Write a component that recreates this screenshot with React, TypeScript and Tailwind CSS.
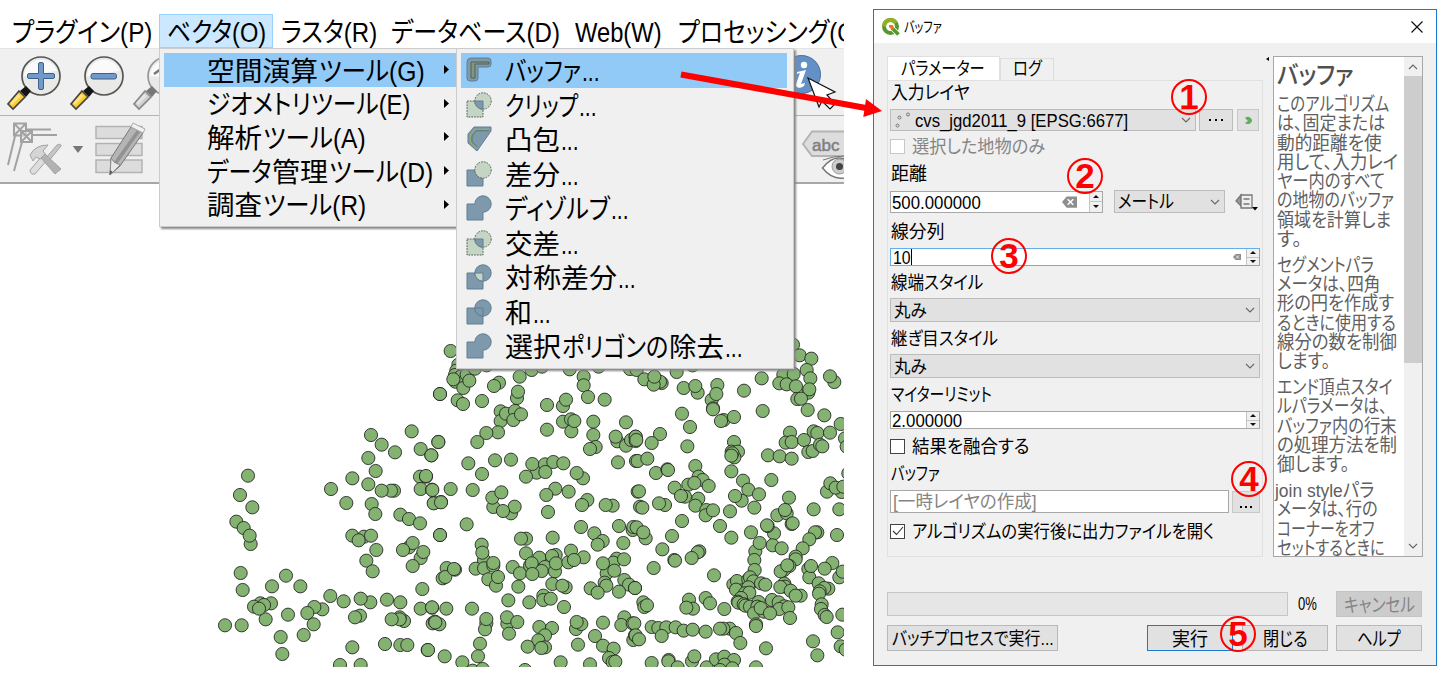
import React, { useLayoutEffect, useRef, useState } from 'react';

type Seg = [string, number];

function Fit({ text, w, className = '' }: { text: string; w: number; className?: string }) {
  const ref = useRef<HTMLSpanElement>(null);
  const [s, setS] = useState(1);
  useLayoutEffect(() => {
    if (ref.current) setS(w / ref.current.offsetWidth);
  }, [text, w]);
  return (
    <span className={`block shrink-0 whitespace-nowrap ${className}`} style={{ width: w }}>
      <span ref={ref} className="inline-block origin-left whitespace-pre" style={{ transform: `scaleX(${s})` }}>{text}</span>
    </span>
  );
}

const Line = ({ segs, className = '' }: { segs: Seg[]; className?: string }) => (
  <span className={`flex shrink-0 items-center gap-px pt-[5px] ${className}`}>
    {segs.map(([t, w], i) => <Fit key={i} text={t} w={w} />)}
  </span>
);

const dotsWest = [
  [690,72],[483,195],[515,224],[555,247],[605,184],[632,237],[664,256],[685,216],[475,264],[497,303],[427,325],[475,343],[363,357],[409,399],[552,362],[543,362],[515,362],[630,320],[648,320],[632,357],[666,359],[672,399],[693,396],[485,402],[496,432],[571,434],[597,447],[630,460],[114,317],[90,375],[127,412],[79,455],[101,474],[122,522],[119,497],[427,497],[462,500],[446,511],[483,497],[499,540],[469,572],[488,604],[597,532],[608,519],[579,540],[632,564],[608,588],[640,546],[690,495],[92,609],[98,660],[228,617],[186,649],[271,649],[45,766],[95,766],[151,700],[183,700],[132,710],[167,748],[162,705],[147,716],[234,734],[337,718],[313,711],[292,729],[311,763],[281,795],[212,801],[217,852],[361,678],[401,694],[481,697],[452,686],[450,737],[435,742],[531,689],[571,697],[637,657],[632,716],[666,713],[582,753],[569,742],[569,748],[545,748],[525,822],[571,825],[592,825],[653,840],[427,832],[390,885],[452,885],[668,760],[675,755],
];
const dotsMid = [
  [62,33],[85,74],[79,92],[75,105],[76,125],[92,110],[110,104],[135,86],[170,76],[100,144],[118,122],[70,118],[30,162],[83,181],[99,192],[156,183],[207,128],[192,138],[269,110],[305,90],[336,80],[419,88],[461,110],[461,136],[506,80],[600,87],[474,171],[524,179],[261,174],[264,155],[212,214],[212,243],[228,221],[255,213],[250,240],[273,223],[204,277],[169,279],[142,306],[25,306],[4,346],[115,370],[156,402],[195,361],[243,359],[351,195],[399,198],[408,179],[351,269],[399,245],[423,238],[424,274],[433,243],[490,245],[490,285],[497,321],[480,327],[588,247],[562,304],[557,290],[588,317],[603,300],[617,290],[617,303],[564,367],[618,363],[7,450],[62,447],[128,450],[11,490],[33,487],[190,501],[187,473],[214,457],[243,520],[254,500],[219,513],[320,398],[288,410],[307,372],[345,373],[370,366],[346,396],[400,370],[459,415],[440,399],[376,446],[416,455],[349,465],[354,516],[472,480],[456,495],[548,497],[527,495],[623,455],[630,500],[30,585],[110,553],[155,614],[162,660],[157,638],[137,686],[162,685],[190,677],[190,669],[50,684],[75,689],[38,715],[46,711],[72,687],[175,718],[198,737],[204,711],[288,596],[273,596],[368,593],[248,681],[270,700],[288,640],[300,677],[328,653],[305,670],[345,681],[335,693],[307,702],[375,694],[377,645],[366,648],[378,670],[415,667],[423,632],[461,652],[432,660],[265,740],[367,732],[407,742],[397,737],[453,561],[493,580],[518,603],[503,614],[567,558],[608,570],[610,561],[580,609],[530,700],[560,656],[550,668],[582,658],[519,670],[553,692],[524,728],[529,737],[583,720],[597,734],[615,744],[482,745],[503,758],[567,755],[6,802],[49,806],[126,806],[28,853],[16,847],[169,850],[165,868],[169,837],[235,781],[232,851],[231,832],[262,846],[237,881],[298,787],[340,767],[340,780],[362,776],[402,801],[328,861],[366,864],[345,886],[325,901],[293,920],[345,922],[334,924],[444,914],[438,867],[454,852],[440,846],[519,848],[583,832],[574,855],[608,850],[495,888],[519,917],[551,926],[610,900],[615,886],[537,954],[548,966],[556,965],[150,911],[144,949],[44,949],[97,967],[-6,930],[128,992],[158,987],[285,990],[392,967],[480,973],[-12,408],
];
const dotsEast = [
  [474,14],[494,46],[529,56],[515,90],[5,90],[28,118],[80,129],[75,125],[56,134],[58,110],[125,96],[173,76],[146,144],[188,158],[181,138],[247,135],[230,180],[244,162],[234,205],[234,208],[327,152],[380,115],[266,240],[258,243],[297,231],[383,213],[141,221],[165,261],[75,282],[50,309],[2,290],[4,300],[8,363],[37,356],[157,319],[63,399],[97,388],[99,390],[181,378],[445,104],[433,130],[476,102],[455,133],[483,139],[526,115],[520,158],[523,148],[487,177],[498,176],[518,210],[568,226],[598,126],[585,109],[617,252],[297,306],[290,335],[309,335],[298,352],[292,340],[289,347],[289,394],[399,346],[434,349],[470,356],[465,278],[452,308],[470,306],[507,300],[536,274],[547,279],[585,278],[520,336],[533,333],[555,314],[562,319],[630,295],[635,320],[324,422],[409,420],[340,449],[372,463],[320,482],[300,468],[358,503],[191,410],[160,434],[203,420],[221,438],[178,429],[190,476],[119,443],[150,470],[138,468],[181,497],[214,510],[212,526],[234,511],[285,514],[12,454],[22,503],[90,495],[72,490],[141,543],[255,558],[111,588],[289,593],[82,628],[5,562],[32,595],[25,577],[462,473],[427,526],[455,520],[450,510],[470,552],[473,550],[536,508],[613,508],[576,455],[586,430],[620,456],[602,443],[625,440],[417,580],[398,558],[396,556],[348,577],[413,616],[440,625],[361,634],[374,609],[606,585],[547,577],[540,577],[523,598],[503,625],[482,650],[482,658],[463,678],[447,690],[437,694],[457,676],[358,660],[359,690],[118,660],[120,662],[193,634],[188,637],[170,654],[56,684],[237,706],[0,744],[162,779],[174,806],[154,803],[212,774],[225,790],[268,807],[25,787],[28,801],[36,796],[520,687],[523,712],[528,678],[592,669],[569,686],[613,712],[623,695],[551,730],[580,746],[568,744],[554,754],[552,761],[560,793],[558,807],[569,825],[575,831],[622,824],[608,877],[534,904],[547,946],[617,919],[632,929],[448,731],[450,740],[436,741],[467,752],[497,767],[482,767],[295,733],[306,723],[340,718],[345,712],[355,724],[322,751],[340,742],[378,730],[391,734],[303,749],[330,760],[343,758],[318,774],[308,785],[310,788],[326,793],[331,797],[345,800],[371,786],[367,800],[357,820],[387,815],[377,804],[411,780],[431,787],[448,799],[433,807],[460,802],[405,820],[465,834],[363,853],[363,858],[50,861],[70,864],[94,862],[80,888],[122,862],[146,872],[173,869],[212,875],[284,866],[265,866],[255,866],[303,879],[316,909],[393,925],[-2,850],[2,886],[12,898],[50,969],[101,960],[100,964],[128,982],[171,964],[178,949],[215,982],[243,958],[268,950],[297,960],[268,974],[255,990],[292,985],[363,982],[640,400],
];

const Dots = ({ pts, x, y }: { pts: number[][]; x: number; y: number }) => (
  <g transform={`translate(${x} ${y}) scale(0.33333)`}>
    {pts.map(([cx, cy], i) => <circle key={i} cx={cx} cy={cy} r="19.7" />)}
  </g>
);

const B = '#7e98ac', BS = '#5f7f96', G = '#c5d5c4';
function GeoIcon({ kind }: { kind: string }) {
  const dash = { stroke: '#4f5f55', strokeWidth: 1, strokeDasharray: '1.7 1.1' };
  return (
    <svg viewBox="0 0 26 26" className="h-[26px] w-[26px] shrink-0" fill={B} stroke={BS} strokeWidth="1">
      {kind === 'buffer' && <>
        <path d="M5 1h17a3 3 0 0 1 3 3v3a3 3 0 0 1-3 3H12v11a3 3 0 0 1-3 3H4a3 3 0 0 1-3-3V5a4 4 0 0 1 4-4z" />
        <path d="M5 21V5h18v2H9v14z" fill="#85947a" stroke="#4d6656" />
      </>}
      {kind === 'clip' && <>
        <rect x="1" y="9" width="16" height="16" fill={G} {...dash} />
        <circle cx="17" cy="9" r="8.2" fill={G} {...dash} />
        <path d="M8.8 9H17v8.2A8.2 8.2 0 0 1 8.8 9z" />
      </>}
      {kind === 'hull' && <>
        <path d="M8 1h17v4L11 25l-9-8V8z" />
        <path d="M23 3.500H9L4.500 9v7.500l6 5.500" fill="none" stroke="#8ea778" strokeWidth="1.600" />
        <path d="M23 4.800H10L6 10v6l5 4.500" fill="none" stroke="#4d7060" strokeWidth=".8" />
      </>}
      {kind === 'diff' && <>
        <path d="M1 9h16v16H1z" />
        <circle cx="17" cy="9" r="8.2" fill={G} {...dash} />
      </>}
      {kind === 'dissolve' && <path d="M1 9h7.8A8.2 8.2 0 1 1 17 17.2V25H1z" />}
      {(kind === 'sym' || kind === 'union') && <>
        <path d="M1 9h16v16H1z" />
        <circle cx="17" cy="9" r="8.2" />
        <path d="M8.8 9H17v8.2A8.2 8.2 0 0 1 8.8 9z" fill={kind === 'sym' ? G : B} />
      </>}
    </svg>
  );
}

const vectorMenu: Seg[][] = [
  [['空間演算', 111], ['ツール(G)', 106]],
  [['ジオメトリツール(E)', 203]],
  [['解析', 55], ['ツール(A)', 103]],
  [['データ', 64], ['管理', 56], ['ツール(D)', 104]],
  [['調査', 55], ['ツール(R)', 103]],
];
const geoMenu: { icon: string; segs: Seg[] }[] = [
  { icon: 'buffer', segs: [['バッファ', 76], ['...', 18]] },
  { icon: 'clip', segs: [['クリップ', 73], ['...', 18]] },
  { icon: 'hull', segs: [['凸包', 55], ['...', 18]] },
  { icon: 'diff', segs: [['差分', 55], ['...', 18]] },
  { icon: 'dissolve', segs: [['ディゾルブ', 105], ['...', 18]] },
  { icon: 'clip', segs: [['交差', 55], ['...', 18]] },
  { icon: 'sym', segs: [['対称差分', 112], ['...', 18]] },
  { icon: 'union', segs: [['和', 27], ['...', 18]] },
  { icon: 'dissolve', segs: [['選択', 56], ['ポリゴンの', 106], ['除去', 55], ['...', 18]] },
];

function Magnifier({ sign, gray = false }: { sign: string; gray?: boolean }) {
  return (
    <svg viewBox="0 0 56 56" className="h-14 w-14 shrink-0">
      <circle cx="35" cy="21" r="19" fill="#e9e9e8" stroke={gray ? '#999' : '#555753'} strokeWidth="1.7" />
      <path d="M18 21a17 17 0 0 1 33-5c-10-1-18 8-33 5z" fill="#fafafa" />
      <path d="M20 31l5 5-5 6-6-6z" fill={gray ? '#777' : '#151515'} />
      <path d="M13 36l6 6L7 54l-5-5z" fill={gray ? '#d0d0d0' : '#fcc92e'} stroke={gray ? '#888' : '#444'} strokeWidth="1.700" />
      <path d="M12 39l3 2-9 9-2-2z" fill={gray ? '#eee' : '#fff0a0'} opacity=".7" />
      {sign === '+' && <path d="M32.500 9q0-1.500 1.500-1.500h2q1.500 0 1.500 1.500v9.500H47q1.500 0 1.500 1.500v2q0 1.500-1.500 1.500h-9.500V33q0 1.500-1.500 1.500h-2q-1.500 0-1.500-1.500v-9.500H23q-1.500 0-1.500-1.500v-2q0-1.500 1.500-1.500h9.500z" fill="#6f9ac9" stroke="#3f6089" />}
      {sign === '-' && <rect x="22" y="18.500" width="25.500" height="5.500" rx="2" fill="#6f9ac9" stroke="#3f6089" />}
      {gray && <path d="M22 19l7-5" fill="none" stroke="#777" strokeWidth="2.500" />}
    </svg>
  );
}

const NodeTool = () => (
  <svg viewBox="0 0 60 56" className="h-14 w-[60px] shrink-0" fill="none" stroke="#a2a2a2">
    <path d="M22 8.500h25M28 14h25M11 15L4 44M18 21L10 50" strokeWidth="2" />
    <path d="M10 2.500h12v12H10zM10 2.500l12 12M22 2.500l-12 12" strokeWidth="2" fill="#eee" fillOpacity=".5" />
    <path d="M17 10h11v11H17zM17 10l11 11M28 10L17 21" strokeWidth="2" fill="#eee" fillOpacity=".5" />
    <path d="M41 38l12-14q4-2 4 1L44 41z" fill="#c6c6c6" />
    <path d="M38 35l5 4-12 14q-5 1-5-4z" fill="#ddd" />
    <path d="M26 34q5-10 18-10l-5 6 3 4-6 4-4-2-3 4z" fill="#d5d5d5" />
    <path d="M37 37l4-4 16 15-6 5z" fill="#b2b2b2" />
  </svg>
);
const EditTool = () => (
  <svg viewBox="0 0 54 56" className="ml-[10px] h-14 w-[54px] shrink-0" fill="#dcdcdc" stroke="#b2b2b2" strokeWidth="1.500">
    <path d="M2 5.500h46v12H2zM2 22.500h46v12H2zM2 39h46v12.500H2z" />
    <path d="M37 6l12 6-23 33-10 9 1-17z" fill="#b5b5b5" stroke="#777" strokeWidth="1" />
    <path d="M43 9l3 2-23 32-3-2z" fill="#929292" stroke="none" />
    <path d="M37 6l2-4 12 6-2 4z" fill="#f2f2f2" stroke="#aaa" strokeWidth="1" />
    <path d="M17 37l3 4 6 3-10 10z" fill="#e8e8e8" stroke="#888" strokeWidth="1" />
    <path d="M16.500 49l2 2-3 3z" fill="#555" stroke="none" />
  </svg>
);

const Chevron = ({ up = false }: { up?: boolean }) => (
  <svg viewBox="0 0 10 6" className="h-[6px] w-[10px] shrink-0" fill="none" stroke="#666" strokeWidth="1.100"><path d={up ? 'M1 5l4-4 4 4' : 'M1 1l4 4 4-4'} /></svg>
);
const Steppers = () => (
  <span className="flex h-full w-[13px] shrink-0 flex-col gap-px bg-[#c4c4c4] pl-px">
    {['M0 3L3 0l3 3z', 'M0 0h6L3 3z'].map((d) => (
      <span key={d} className="flex flex-1 items-center justify-center bg-[#f0f0f0]">
        <svg viewBox="0 0 6 3" className="h-[3px] w-[6px]"><path d={d} fill="#111" /></svg>
      </span>
    ))}
  </span>
);
const Clear = ({ small = false }: { small?: boolean }) => (
  <svg viewBox="0 0 16 12" className={small ? 'mr-[5px] h-[6px] w-2' : 'mr-3 h-3 w-[15px]'}>
    <path d="M0 6l5-6h11v12H5z" fill="#8e8e8e" /><path d="M6 3l6 6M12 3L6 9" stroke="#fff" strokeWidth="1.600" />
  </svg>
);
const Combo = ({ children, className = '' }: { children: React.ReactNode; className?: string }) => (
  <div className={`flex items-center justify-between border border-[#bcbcbc] bg-[#e1e1e1] pr-1 pl-[3px] ${className}`}>{children}<Chevron /></div>
);
const Check = ({ on = false, dim = false }: { on?: boolean; dim?: boolean }) => (
  <span className={`flex h-[15px] w-[15px] items-center justify-center border bg-white ${dim ? 'border-[#c8c8c8]' : 'border-[#444]'}`}>
    {on && <svg viewBox="0 0 12 10" className="h-[10px] w-3" fill="none" stroke="#333" strokeWidth="1.100"><path d="M1 5l3.500 3.500L11 1" /></svg>}
  </span>
);
const Btn = ({ text, w, className = '' }: { text: string; w: number; className?: string }) => (
  <button className={`flex h-[26px] w-[86px] items-center justify-center border text-[19px] leading-none ${className}`}><Fit text={text} w={w} className="pt-[2px]" /></button>
);

const helpText: Seg[][] = [
  [['このアルゴリズム', 112], ['は、固定または', 108], ['動的距離を使', 105], ['用して、入力レイ', 121], ['ヤー内のすべて', 108], ['の地物のバッファ', 117], ['領域を計算しま', 114], ['す。', 25]],
  [['セグメントパラ', 97], ['メータは、四角', 103], ['形の円を作成す', 117], ['るときに使用する', 119], ['線分の数を制御', 120], ['します。', 53]],
  [['エンド頂点スタイ', 116], ['ルパラメータは、', 110], ['バッファ内の行末', 120], ['の処理方法を制', 120], ['御します。', 72]],
  [['join styleパラ', 99], ['メータは、行の', 101], ['コーナーをオフ', 98], ['セットするときに', 108]],
];

const Badge = ({ n, className }: { n: string; className: string }) => (
  <span className={`absolute flex h-9 w-9 items-center justify-center rounded-full border-2 border-[#f00] pb-px text-[35px] leading-none font-bold text-[#f00] ${className}`}>{n}</span>
);

export default function App() {
  return (
    <div className="relative flex h-[676px] w-[1437px] overflow-hidden bg-white font-['Liberation_Sans','Noto_Sans_CJK_JP',sans-serif] leading-none text-black [font-feature-settings:'palt']">
      <section className="relative flex h-[667px] w-[844px] shrink-0 flex-col overflow-hidden">
        <nav className="flex h-12 shrink-0 pt-[14px] text-[27px]">
          <Line segs={[['プラグイン(P)', 140]]} className="ml-3" />
          <div className="ml-[7px] flex h-[34px] w-[114px] shrink-0 items-center border border-[#99d1ff] bg-[#cce8ff] pl-[7px]"><Fit text="ベクタ(O)" w={99} className="pt-[5px]" /></div>
          <Line segs={[['ラスタ(R)', 96]]} className="ml-2" />
          <Line segs={[['データベース(D)', 169]]} className="ml-[14px]" />
          <Line segs={[['Web(W)', 87]]} className="ml-[15px]" />
          <Line segs={[['プロセッシング(O)', 186]]} className="ml-4" />
        </nav>
        <div className="flex h-[68px] shrink-0 justify-between border-t border-b border-t-[#e4e4e4] border-b-[#b4b4b4] bg-[#f0f0f0]">
          <div className="flex gap-[7px] pt-[6px] pl-[6px]"><Magnifier sign="+" /><Magnifier sign="-" /><Magnifier sign="1" gray /></div>
          <svg viewBox="0 0 64 60" className="mt-[5px] h-[60px] w-16 shrink-0">
            <circle cx="21.500" cy="20.500" r="19" fill="#6391c6" stroke="#456f9f" />
            <circle cx="24" cy="11" r="3.200" fill="#fff" />
            <path d="M17 18l9-2-5 14 4-1-1 3c-4 3-9 2-8-2l4-11-3 1z" fill="#fff" />
            <path d="M28 24l27 14-8 3 8 9-5 5-8-8-3 6z" fill="#fff" stroke="#111" strokeWidth="1.200" />
          </svg>
        </div>
        <div className="flex h-[68px] shrink-0 justify-between border-b-2 border-[#a7a7a7] bg-[#f0f0f0]">
          <div className="flex pt-[5px] pl-1">
            <NodeTool />
            <svg viewBox="0 0 12 8" className="mt-[25px] ml-2 h-[7px] w-3"><path d="M0 0h12L6 8z" fill="#777" /></svg>
            <EditTool />
          </div>
          <svg viewBox="0 0 44 56" className="mt-2 h-14 w-11 overflow-hidden">
            <path d="M3 20l9-12.500h40V32H12z" fill="#ddd" stroke="#b4b4b4" strokeWidth="2" />
            <text x="12" y="26.500" fontFamily="Liberation Sans" fontSize="17" fill="#808080" stroke="#808080" strokeWidth=".5">abc</text>
            <path d="M22.500 44q8-10 16-10 6 0 12 4v14q-16 7-28-8z" fill="#fff" stroke="#777" strokeWidth="1.500" /><circle cx="39.500" cy="42.500" r="7.500" fill="#ccc" stroke="#999" /><circle cx="39.500" cy="42.500" r="3.500" fill="#444" />
            <path d="M23 36q10-4 22-4" fill="none" stroke="#777" />
          </svg>
        </div>
        <svg viewBox="0 184 844 483" className="h-[483px] w-[844px] shrink-0" fill="#83b271" stroke="#232323" strokeWidth="2.600">
          <Dots pts={dotsWest} x={210} y={370} /><Dots pts={dotsMid} x={430} y={340} /><Dots pts={dotsEast} x={635} y={340} />
        </svg>
        <div className="absolute top-12 left-[159px] h-[179px] w-[298px] border border-[#ccc] bg-[#f0f0f0] pt-1 pl-1 text-[27px] shadow-[2px_2px_2px_#888]">
          {vectorMenu.map((segs, i) => (
            <div key={i} className={`flex h-[33.6px] items-center justify-between pr-[7px] pl-[43px] ${i ? '' : 'bg-[#91c9f7]'}`}>
              <Line segs={segs} />
              <svg viewBox="0 0 5 9" className="h-[9px] w-[5px]"><path d="M0 0l5 4.500L0 9z" /></svg>
            </div>
          ))}
        </div>
        <div className="absolute top-12 left-[456px] h-[321px] w-[338px] border border-[#ccc] bg-[#f0f0f0] pt-1 pr-[6px] pl-1 text-[27px] shadow-[2px_2px_2px_#888]">
          {geoMenu.map((m, i) => (
            <div key={i} className={`flex h-[34.5px] items-center gap-[13px] pl-[5px] ${i ? '' : 'bg-[#91c9f7]'}`}>
              <GeoIcon kind={m.icon} /><Line segs={m.segs} />
            </div>
          ))}
        </div>
      </section>

      <section className="mt-[9px] ml-[29px] flex h-[657px] w-[564px] shrink-0 flex-col border border-[#1b7ad0] bg-[#f0f0f0] text-[18.500px]">
        <header className="flex h-[33px] shrink-0 items-center bg-white pr-[13px] pl-2">
          <svg viewBox="0 0 18 18" className="h-[18px] w-[18px]"><circle cx="8.500" cy="8.500" r="6.500" fill="none" stroke="#589632" strokeWidth="4" /><path d="M2 8.500A6.500 6.500 0 0 1 14 5" fill="none" stroke="#93b023" strokeWidth="4" /><path d="M9 9l8 8" stroke="#fff" strokeWidth="5" /><path d="M10 10l6.500 6.500" stroke="#589632" strokeWidth="3.500" /><path d="M7 7h4l1 4-2 1-3-3z" fill="#ee7913" /></svg>
          <Fit text="バッファ" w={38} className="ml-[4px] text-[15px]" />
          <svg viewBox="0 0 12 12" className="ml-auto h-3 w-3" stroke="#111" strokeWidth="1.200"><path d="M.5.5l11 11M11.500.5l-11 11" /></svg>
        </header>
        <div className="flex h-[514px] shrink-0 pt-[13px] pl-[13px]">
          <div className="flex w-[376px] flex-col">
            <div className="flex h-6 shrink-0 items-end">
              <div className="flex h-6 w-[113px] items-center border border-b-0 border-[#e0e0e0] bg-white pl-[13px]"><Fit text="パラメーター" w={84} className="pt-px" /></div>
              <div className="flex h-[22px] w-[54px] items-center border border-b-0 border-[#dedede] pl-3"><Fit text="ログ" w={29} /></div>
            </div>
            <div className="flex h-[477px] shrink-0 flex-col border border-t border-[#e0e0e0] px-[2px]">
              <div className="mb-[5px] flex h-[23px] items-center pt-[2px] pl-px"><Fit text="入力レイヤ" w={79} /></div>
              <div className="flex h-[22px] items-center">
                <Combo className="h-[22px] w-[306px]">
                  <span className="flex items-center">
                    <svg viewBox="0 0 18 18" className="mr-[3px] h-[18px] w-[18px]" fill="#ddd" stroke="#777"><circle cx="5.500" cy="6.500" r="1.500" /><circle cx="14" cy="3.500" r="1.500" /><circle cx="3.500" cy="14.500" r="1.500" /></svg>
                    <Fit text="cvs_jgd2011_9 [EPSG:6677]" w={213} className="pt-[3px]" />
                  </span>
                </Combo>
                <span className="ml-[3px] flex h-[22px] w-[34px] items-center justify-center gap-1 border border-[#bcbcbc] bg-[#e1e1e1]"><i className="h-[2px] w-[2px] bg-black" /><i className="h-[2px] w-[2px] bg-black" /><i className="h-[2px] w-[2px] bg-black" /></span>
                <span className="ml-1 flex h-[22px] w-[22px] items-center justify-center border border-[#c8c8c8] bg-[#e1e1e1]"><svg viewBox="0 0 8 8" className="h-2 w-2"><path d="M1 2a4 3.500 0 1 1 0 5l3-2z" fill="#60ae61" /></svg></span>
              </div>
              <div className="flex h-[30px] items-center gap-[7px] text-[#858585]"><Check dim /><Fit text="選択した地物のみ" w={133} className="pt-[2px]" /></div>
              <div className="mb-1 flex h-[25px] items-center pt-[2px] pl-px"><Fit text="距離" w={36} /></div>
              <div className="flex h-[23px] items-center">
                <div className="flex h-[22px] w-[213px] items-center border border-[#a8a8a8] bg-white pl-px"><Fit text="500.000000" w={89} className="pt-[3px]" /><span className="ml-auto"><Clear /></span><Steppers /></div>
                <Combo className="ml-[11px] h-[23px] w-[111px]"><Fit text="メートル" w={56} className="pt-[2px]" /></Combo>
                <svg viewBox="0 0 24 18" className="ml-[10px] h-[18px] w-6" fill="#eee" stroke="#777" strokeWidth="1.300"><path d="M6 2L1 8l5 5z" fill="#999" /><path d="M6 2h11v13H6zM8.500 6h6M8.500 11h6" /><path d="M17 14h6l-3 3.500z" fill="#000" stroke="none" /></svg>
              </div>
              <div className="mt-[7px] mb-1 flex h-6 items-center pt-px pl-px"><Fit text="線分列" w={54} /></div>
              <div className="flex h-[18px] items-center border border-[#66aee8] bg-white pl-[2px]"><Fit text="10" w={18} className="pt-[2px]" /><i className="h-4 w-px bg-black" /><span className="ml-auto"><Clear small /></span><Steppers /></div>
              <div className="my-1 flex h-6 items-center pt-[2px] pl-px"><Fit text="線端スタイル" w={92} /></div>
              <Combo className="h-6"><Fit text="丸み" w={33} className="pt-[2px]" /></Combo>
              <div className="my-1 flex h-6 items-center pt-[2px] pl-px"><Fit text="継ぎ目スタイル" w={107} /></div>
              <Combo className="h-6"><Fit text="丸み" w={33} className="pt-[2px]" /></Combo>
              <div className="mt-1 mb-[5px] flex h-6 items-center pt-[2px] pl-px"><Fit text="マイターリミット" w={101} /></div>
              <div className="flex h-[18px] items-center border border-[#a8a8a8] bg-white pl-px"><Fit text="2.000000" w={70} className="pt-[2px]" /><span className="ml-auto h-full"><Steppers /></span></div>
              <div className="mt-[5px] flex h-6 items-center gap-[7px]"><Check /><Fit text="結果を融合する" w={117} className="pt-[2px]" /></div>
              <div className="my-1 flex h-6 items-center pt-px pl-px"><Fit text="バッファ" w={49} /></div>
              <div className="flex h-[23px] items-center">
                <div className="flex h-[23px] w-[339px] items-center border border-[#a8a8a8] bg-white pl-[2px] text-[#858585]"><Fit text="[一時レイヤの作成]" w={144} className="pt-[2px]" /></div>
                <span className="ml-[3px] flex h-[22px] w-7 items-center justify-center gap-[3px] border border-[#c8c8c8] bg-[#e1e1e1] pt-[11px]"><i className="h-[2px] w-[2px] bg-black" /><i className="h-[2px] w-[2px] bg-black" /><i className="h-[2px] w-[2px] bg-black" /></span>
              </div>
              <div className="mt-[6px] flex h-6 items-center gap-[7px]"><Check on /><Fit text="アルゴリズムの実行後に出力ファイルを開く" w={302} className="pt-[2px]" /></div>
            </div>
          </div>
          <svg viewBox="0 0 3 4" className="mt-[1px] ml-[3px] h-1 w-[3px]"><path d="M3 0v4L0 2z" /></svg>
          <div className="ml-1 flex h-[501px] w-[150px] border border-[#a8a8a8] bg-white text-[#606060]">
            <div className="w-[130px] overflow-hidden pl-[3px]">
              <div className="mb-px flex h-[37px] items-center text-[25px] font-medium text-[#505050]"><Fit text="バッファ" w={76} /></div>
              {helpText.map((p, i) => (
                <div key={i} className={`mb-[6.500px] text-[19px] leading-[19.300px] ${i === 3 ? '-ml-[2px]' : ''}`}>
                  {p.map(([t, w]) => <Fit key={t} text={t} w={w} className={i === 3 && t[0] !== 'j' ? 'ml-[2px]' : ''} />)}
                </div>
              ))}
            </div>
            <div className="flex w-[18px] flex-col items-center bg-[#f0f0f0]">
              <span className="flex h-[19px] items-center"><Chevron up /></span>
              <span className="h-[287px] w-full bg-[#cdcdcd]" />
              <span className="mt-auto flex h-[20px] items-center"><Chevron /></span>
            </div>
          </div>
        </div>
        <div className="mt-[34px] flex h-[26px] shrink-0 items-center pl-[13px]">
          <div className="h-6 w-[401px] border border-[#c6c6c6] bg-[#e6e6e6]" />
          <Fit text="0%" w={19} className="ml-[10px] pt-px" />
          <Btn text="キャンセル" w={71} className="ml-[19px] border-[#c4c4c4] bg-[#cccccc] text-[#858585]" />
        </div>
        <div className="mt-2 flex h-[26px] shrink-0 items-center pl-[13px]">
          <button className="flex h-[26px] w-[171px] items-center border border-[#b8b8b8] bg-[#e1e1e1] pl-1 leading-none"><Fit text="バッチプロセスで実行..." w={162} className="pt-[2px]" /></button>
          <Btn text="実行" w={36} className="ml-[89px] border-[#1b7ad0] bg-[#e1e1e1]" />
          <Btn text="閉じる" w={45} className="ml-[9px] border-[#b8b8b8] bg-[#e1e1e1]" />
          <Btn text="ヘルプ" w={44} className="ml-2 border-[#b8b8b8] bg-[#e1e1e1]" />
        </div>
      </section>

      <svg viewBox="0 0 206 60" className="absolute top-[65px] left-[678px] h-[60px] w-[206px]"><path d="M3 9.500L188 43" stroke="#f00" strokeWidth="6.300" /><path d="M188 34l16 12-18.700 6z" fill="#f00" /></svg>
      <Badge n="1" className="top-[79px] left-[1171px]" />
      <Badge n="2" className="top-[158px] left-[1067px]" />
      <Badge n="3" className="top-[238px] left-[991px]" />
      <Badge n="4" className="top-[461px] left-[1231px]" />
      <Badge n="5" className="top-[616px] left-[1220px]" />
    </div>
  );
}
